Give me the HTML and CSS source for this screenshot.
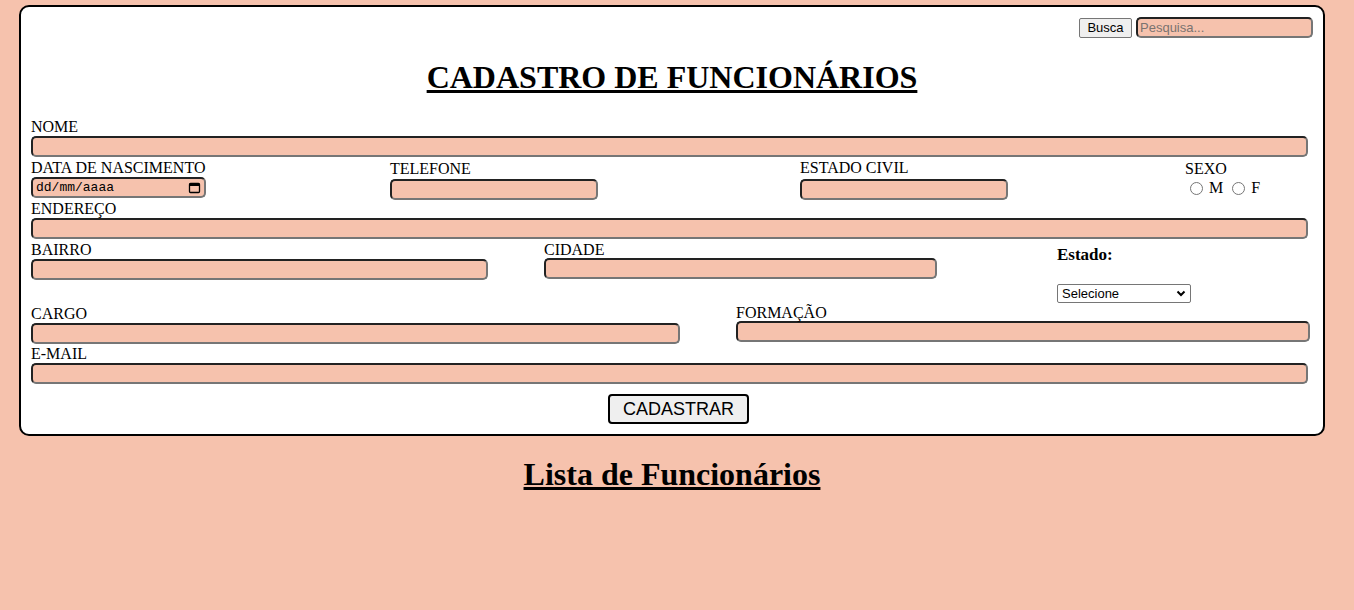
FILE: index.html
```html
<!DOCTYPE html>
<html lang="pt-BR">
<head>
<meta charset="utf-8">
<title>Cadastro de Funcionários</title>
<link rel="stylesheet" href="styles.css">
</head>
<body>
<div class="card">
  <div class="search">
    <button class="busca" type="button">Busca</button>
    <input class="pesquisa" type="text" placeholder="Pesquisa...">
  </div>
  <h1 class="title">CADASTRO DE FUNCIONÁRIOS</h1>
  <form class="form">
    <div class="row r-nome">
      <div class="field full">
        <label>NOME</label>
        <input type="text" class="inp">
      </div>
    </div>
    <div class="row r-dados">
      <div class="field c1">
        <label>DATA DE NASCIMENTO</label>
        <div class="date inp"><span>dd/mm/aaaa</span>
          <svg width="13" height="13" viewBox="0 0 13 13"><rect x="1.5" y="2.5" width="10" height="9" rx="1" fill="none" stroke="#000" stroke-width="1.3"/><rect x="1.5" y="2.5" width="10" height="2.5" fill="#000"/></svg>
        </div>
      </div>
      <div class="field c2 lowered">
        <label>TELEFONE</label>
        <input type="text" class="inp w208">
      </div>
      <div class="field c3">
        <label>ESTADO CIVIL</label>
        <input type="text" class="inp w208">
      </div>
      <div class="field c4 lowered">
        <label>SEXO</label>
        <div class="radios">
          <span class="radio"></span><span class="rl">M</span>
          <span class="radio"></span><span class="rl">F</span>
        </div>
      </div>
    </div>
    <div class="row r-end">
      <div class="field full">
        <label>ENDEREÇO</label>
        <input type="text" class="inp">
      </div>
    </div>
    <div class="row r-bairro">
      <div class="field b1">
        <label>BAIRRO</label>
        <input type="text" class="inp w457">
      </div>
      <div class="field b2">
        <label>CIDADE</label>
        <input type="text" class="inp w393 up1">
      </div>
      <div class="field b3">
        <div class="estado">Estado:</div>
        <div class="select"><span>Selecione</span>
          <svg width="10" height="7" viewBox="0 0 10 7"><path d="M1.5 1.5 L5 5 L8.5 1.5" fill="none" stroke="#000" stroke-width="2"/></svg>
        </div>
      </div>
    </div>
    <div class="row r-cargo">
      <div class="field g1">
        <label>CARGO</label>
        <input type="text" class="inp w649">
      </div>
      <div class="field g2">
        <label>FORMAÇÃO</label>
        <input type="text" class="inp w574">
      </div>
    </div>
    <div class="row r-email">
      <div class="field full">
        <label>E-MAIL</label>
        <input type="text" class="inp">
      </div>
    </div>
    <div class="actions">
      <button type="button" class="cadastrar">CADASTRAR</button>
    </div>
  </form>
</div>
<h2 class="lista">Lista de Funcionários</h2>
</body>
</html>
```
FILE: styles.css
```css
html, body {
  margin: 0;
  padding: 0;
  background: #f6c2ad;
}
body {
  font-family: "Liberation Serif", "Times New Roman", serif;
  font-size: 16px;
  color: #000;
  padding-top: 5px;
}
.card {
  margin-left: 19px;
  width: 1306px;
  height: 431px;
  box-sizing: border-box;
  background: #fff;
  border: 2px solid #000;
  border-radius: 10px;
  padding: 10px 10px 0 10px;
}
.search {
  display: flex;
  justify-content: flex-end;
  align-items: center;
  gap: 4px;
}
.busca {
  font-family: "Liberation Sans", Arial, sans-serif;
  font-size: 13px;
  height: 20px;
  padding: 0 6px;
  background: #efefef;
  border: 1px solid #767676;
  border-radius: 2px;
  color: #000;
  width: 53px;
}
.pesquisa {
  width: 177px;
  height: 21px;
  box-sizing: border-box;
  font-family: "Liberation Sans", Arial, sans-serif;
  font-size: 13px;
  padding: 1px 2px;
  background: #f6c2ad;
  border: 2px solid;
  border-color: #222 #767676 #767676 #222;
  border-radius: 5px;
}
.pesquisa::placeholder { color: #7a7370; }
.title {
  font-size: 32px;
  font-weight: bold;
  text-decoration: underline;
  text-align: center;
  margin: 21px 0 0 0;
  line-height: 37px;
}
.form {
  margin-top: 20px;
}
.row {
  display: flex;
}
.field label {
  display: block;
  line-height: 18px;
  height: 18px;
  padding-top: 2px;
}
.inp {
  display: block;
  box-sizing: border-box;
  height: 21px;
  margin-top: 0;
  background: #f6c2ad;
  border: 2px solid;
  border-color: #222 #767676 #767676 #222;
  border-radius: 5px;
  padding: 1px 2px;
  font-size: 13px;
}
.full { width: 100%; }
.full .inp { width: 1277px; }
.r-dados { height: 41px; }
.c1 { width: 359px; }
.c2 { width: 410px; }
.c3 { width: 385px; }
.c4 { flex: 1; }
.lowered { padding-top: 1px; }
.w208 { width: 208px; margin-top: 1px; }
.c3 .w208 { margin-top: 2px; }
.date {
  width: 175px;
  display: flex;
  align-items: center;
  justify-content: space-between;
  font-family: "Liberation Mono", "DejaVu Sans Mono", monospace;
  font-size: 13px;
  padding: 0 3px 0 3px;
}
.date svg { display: block; }
.radios {
  display: flex;
  align-items: center;
  margin-top: 2px;
  padding-left: 5px;
  height: 16px;
}
.radio {
  width: 13px;
  height: 13px;
  box-sizing: border-box;
  border: 1px solid #767676;
  border-radius: 50%;
  background: #fff;
  margin-right: 6px;
}
.rl { margin-right: 9px; }
.b1 { width: 513px; }
.b2 { width: 513px; }
.b3 { flex: 1; }
.w457 { width: 457px; }
.w393 { width: 393px; }
.up1 { margin-top: -1px; }
.estado {
  font-weight: bold;
  font-size: 17px;
  line-height: 20px;
  margin-top: 6px;
}
.select {
  margin-top: 19px;
  width: 134px;
  height: 19px;
  box-sizing: border-box;
  border: 1px solid #767676;
  border-radius: 2px;
  background: #fff;
  display: flex;
  align-items: center;
  justify-content: space-between;
  padding: 0 4px 0 4px;
  font-family: "Liberation Sans", Arial, sans-serif;
  font-size: 13px;
}
.g1 { width: 705px; }
.w649 { width: 649px; }
.w574 { width: 574px; margin-top: -1px; }
.g2 { margin-top: -1px; }
.r-email { margin-top: -1px; }
.actions {
  display: flex;
  justify-content: center;
  margin-top: 10px;
}
.cadastrar {
  font-family: "Liberation Sans", Arial, sans-serif;
  font-size: 18px;
  width: 141px;
  height: 30px;
  margin-left: 13px;
  background: #efefef;
  border: 2px solid #000;
  border-radius: 4px;
  color: #000;
  padding: 0;
}
.lista {
  width: 1306px;
  margin: 20px 0 0 19px;
  font-size: 32px;
  font-weight: bold;
  text-decoration: underline;
  text-align: center;
  line-height: 37px;
}
```
